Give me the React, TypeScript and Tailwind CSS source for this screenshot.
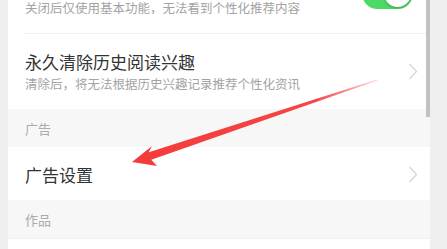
const font = { fontFamily: '"Noto Sans CJK SC", "Noto Sans", sans-serif' };

function Chevron() {
  return (
    <svg width="10" height="17" viewBox="0 0 10 17" className="shrink-0">
      <polyline points="1.5,1 8.5,8.5 1.5,16" fill="none" stroke="#d6d6d6" strokeWidth="1.3" />
    </svg>
  );
}

function Toggle() {
  return (
    <div className="relative h-[31px] w-[51px] shrink-0 rounded-full bg-[#4cd964]">
      <div className="absolute right-[2px] top-[2px] h-[27px] w-[27px] rounded-full bg-white shadow-[0_1px_3px_rgba(0,0,0,0.25)]" />
    </div>
  );
}

function SectionHeader({ label }: { label: string }) {
  return (
    <div className="flex h-[38px] items-center bg-[#f7f7f7] pl-[17px] pt-[2px] text-[13px] text-[#ababab]">
      {label}
    </div>
  );
}

export default function App() {
  return (
    <div className="relative flex h-[249px] w-[447px] overflow-hidden bg-[#efefef]" style={font}>
      <div className="w-[8px] shrink-0" />
      <div className="relative w-[422px] shrink-0 bg-white">
        {/* 个性化推荐 (title scrolled off the top) */}
        <div className="ml-[17px] h-[34px] border-b border-[#efefef]">
          <div className="text-[12.5px] leading-[15px] text-[#a3a3a3]">
            关闭后仅使用基本功能，无法看到个性化推荐内容
          </div>
        </div>
        <div className="absolute right-[17px] top-[-22px]">
          <Toggle />
        </div>

        <div className="flex h-[75px] items-center pl-[17px] pr-[12px]">
          <div className="flex flex-1 flex-col">
            <div className="text-[17px] leading-[24px] text-[#333]">永久清除历史阅读兴趣</div>
            <div className="mt-[1px] text-[12.5px] leading-[18px] text-[#a3a3a3]">
              清除后，将无法根据历史兴趣记录推荐个性化资讯
            </div>
          </div>
          <Chevron />
        </div>

        <SectionHeader label="广告" />

        <div className="flex h-[53px] items-center pl-[17px] pr-[12px] pt-[2px]">
          <div className="flex-1 text-[17px] leading-[24px] text-[#333]">广告设置</div>
          <Chevron />
        </div>

        <SectionHeader label="作品" />

        <div className="h-[60px] border-t border-[#efefef] bg-white" />

        <div className="absolute right-0 top-0 h-[117px] w-[4px] bg-[#c2c2c2]" />
      </div>
      <div className="flex-1" />

      <svg className="pointer-events-none absolute left-0 top-0" width="447" height="249" viewBox="0 0 447 249">
        <defs>
          <linearGradient id="arrowFade" x1="377" y1="80" x2="132" y2="162" gradientUnits="userSpaceOnUse">
            <stop offset="0" stopColor="#f53b3b" stopOpacity="0.2" />
            <stop offset="0.25" stopColor="#f53b3b" stopOpacity="0.95" />
            <stop offset="1" stopColor="#f53b3b" />
          </linearGradient>
        </defs>
        <polygon
          points="132,162 152,146 148.7,152.2 377,79.4 377.4,80.6 151.3,159.8 157,166"
          fill="url(#arrowFade)"
        />
      </svg>
    </div>
  );
}
